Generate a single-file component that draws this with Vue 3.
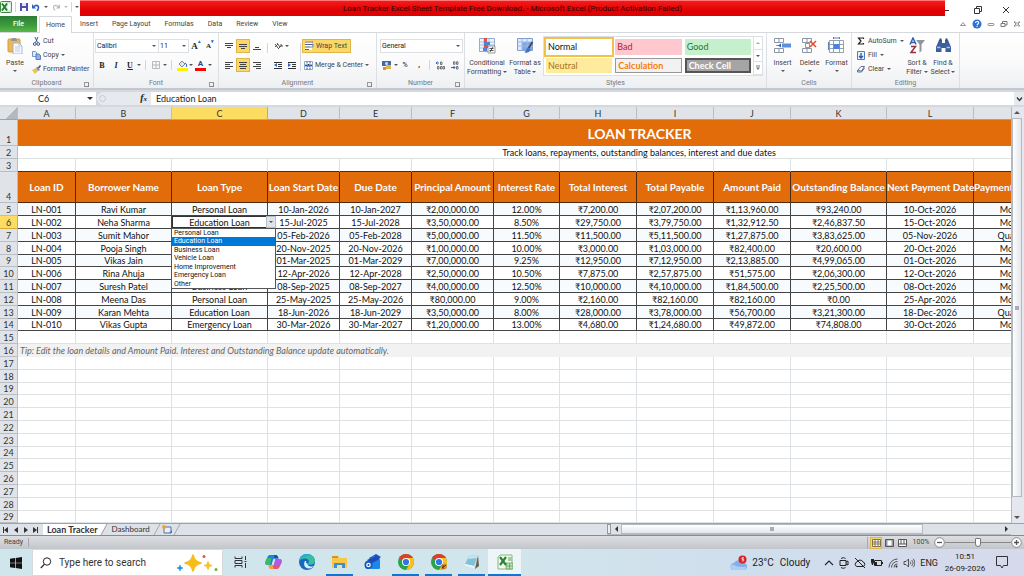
<script setup>
import { ref } from 'vue'

const tabs = ['Insert', 'Page Layout', 'Formulas', 'Data', 'Review', 'View']
const columns = [
  ['A', 58], ['B', 96], ['C', 96], ['D', 72], ['E', 72], ['F', 82], ['G', 66], ['H', 77],
  ['I', 77], ['J', 77], ['K', 96], ['L', 87], ['M', 86], ['N', 100], ['O', 101]
]
const headings = ['Loan ID', 'Borrower Name', 'Loan Type', 'Loan Start Date', 'Due Date', 'Principal Amount', 'Interest Rate', 'Total Interest', 'Total Payable', 'Amount Paid', 'Outstanding Balance', 'Next Payment Date', 'Payment Frequency', '', '']
const loans = [
  ['LN-001', 'Ravi Kumar', 'Personal Loan', '10-Jan-2026', '10-Jan-2027', '₹2,00,000.00', '12.00%', '₹7,200.00', '₹2,07,200.00', '₹1,13,960.00', '₹93,240.00', '10-Oct-2026', 'Monthly', '', ''],
  ['LN-002', 'Neha Sharma', 'Education Loan', '15-Jul-2025', '15-Jul-2028', '₹3,50,000.00', '8.50%', '₹29,750.00', '₹3,79,750.00', '₹1,32,912.50', '₹2,46,837.50', '15-Oct-2026', 'Monthly', '', ''],
  ['LN-003', 'Sumit Mahor', 'Business Loan', '05-Feb-2026', '05-Feb-2028', '₹5,00,000.00', '11.50%', '₹11,500.00', '₹5,11,500.00', '₹1,27,875.00', '₹3,83,625.00', '05-Nov-2026', 'Quarterly', '', ''],
  ['LN-004', 'Pooja Singh', 'Vehicle Loan', '20-Nov-2025', '20-Nov-2026', '₹1,00,000.00', '10.00%', '₹3,000.00', '₹1,03,000.00', '₹82,400.00', '₹20,600.00', '20-Oct-2026', 'Monthly', '', ''],
  ['LN-005', 'Vikas Jain', 'Home Improvement', '01-Mar-2025', '01-Mar-2029', '₹7,00,000.00', '9.25%', '₹12,950.00', '₹7,12,950.00', '₹2,13,885.00', '₹4,99,065.00', '01-Oct-2026', 'Monthly', '', ''],
  ['LN-006', 'Rina Ahuja', 'Personal Loan', '12-Apr-2026', '12-Apr-2028', '₹2,50,000.00', '10.50%', '₹7,875.00', '₹2,57,875.00', '₹51,575.00', '₹2,06,300.00', '12-Oct-2026', 'Monthly', '', ''],
  ['LN-007', 'Suresh Patel', 'Business Loan', '08-Sep-2025', '08-Sep-2027', '₹4,00,000.00', '12.50%', '₹10,000.00', '₹4,10,000.00', '₹1,84,500.00', '₹2,25,500.00', '08-Oct-2026', 'Monthly', '', ''],
  ['LN-008', 'Meena Das', 'Personal Loan', '25-May-2025', '25-May-2026', '₹80,000.00', '9.00%', '₹2,160.00', '₹82,160.00', '₹82,160.00', '₹0.00', '25-Apr-2026', 'Monthly', '', ''],
  ['LN-009', 'Karan Mehta', 'Education Loan', '18-Jun-2026', '18-Jun-2029', '₹3,50,000.00', '8.00%', '₹28,000.00', '₹3,78,000.00', '₹56,700.00', '₹3,21,300.00', '18-Dec-2026', 'Quarterly', '', ''],
  ['LN-010', 'Vikas Gupta', 'Emergency Loan', '30-Mar-2026', '30-Mar-2027', '₹1,20,000.00', '13.00%', '₹4,680.00', '₹1,24,680.00', '₹49,872.00', '₹74,808.00', '30-Oct-2026', 'Monthly', '', '']
]
const loanTypes = ['Personal Loan', 'Education Loan', 'Business Loan', 'Vehicle Loan', 'Home Improvement', 'Emergency Loan', 'Other']
const selected = ref('Education Loan')
const lastRow = 29
</script>

<template>
  <div class="app">
    <header class="titlebar">
      <div class="qat">
        <svg width="12" height="12" viewBox="0 0 12 12"><rect x=".5" y=".5" width="11" height="11" rx="1" fill="#e7f3e3" stroke="#3c8f3f" /><rect x="7" y="2" width="4" height="8" fill="#fff" stroke="#8cc08c" stroke-width=".5" /><path d="M2 2.500l5 7M7 2.500l-5 7" stroke="#217a2c" stroke-width="1.800" /></svg>
        <i class="bar"></i>
        <button aria-label="Save"><svg width="8" height="8" viewBox="0 0 8 8"><path d="M0 0h8v8H0z" fill="#4a4fb0" /><path d="M2 0h4v3H2z" fill="#dfe6fa" /><path d="M2 5h4v3H2z" fill="#fff" /></svg></button>
        <button aria-label="Undo"><svg width="8" height="8" viewBox="0 0 8 8"><path d="M2 3.500C5 1 7.500 3 6 6.500L5 8" fill="none" stroke="#2f62c4" stroke-width="1.600" /><path d="M0 1v4.500h4z" fill="#2f62c4" /></svg></button>
        <i class="caret"></i>
        <button aria-label="Redo"><svg width="8" height="8" viewBox="0 0 8 8"><path d="M6 3.500C3 1 .5 3 2 6l1 1.500" fill="none" stroke="#bbb" stroke-width="1.200" /><path d="M8 1v4.500H4z" fill="#bbb" /></svg></button>
        <i class="caret pale"></i>
        <i class="bar"></i>
        <i class="caret more"></i>
      </div>
      <div class="title">Loan Tracker Excel Sheet Template Free Download. - Microsoft Excel (Product Activation Failed)</div>
      <div class="win">
        <button aria-label="Minimize"><svg width="8" height="8" viewBox="0 0 8 8"><path d="M0 4.500h4" stroke="#333" /></svg></button>
        <button aria-label="Restore"><svg width="8" height="8" viewBox="0 0 8 8"><path d="M.5 2.500h5v5h-5zM2.500 2V.5h5v5H6" fill="none" stroke="#333" /></svg></button>
        <button aria-label="Close"><svg width="8" height="8" viewBox="0 0 8 8"><path d="M1 1l6 6M7 1L1 7" stroke="#333" /></svg></button>
      </div>
    </header>

    <nav class="tabs">
      <button class="file">File</button>
      <button class="home">Home</button>
      <button v-for="t in tabs" :key="t" class="tab">{{ t }}</button>
      <div class="mdi">
        <svg width="8" height="8" viewBox="0 0 8 8"><path d="M4 2.500L6.500 5.500h-5z" fill="#fff" stroke="#777" stroke-width=".8" /></svg>
        <svg width="10" height="10" viewBox="0 0 10 10"><circle cx="5" cy="5" r="4.500" fill="#2f6fd0" /><path d="M3.500 4c0-2 3.200-2 3.200-.2C6.700 5 5.100 5 5.100 6.200M5.100 7v1" fill="none" stroke="#fff" stroke-width="1.100" /></svg>
        <svg width="8" height="8" viewBox="0 0 8 8"><rect x="1" y="3.500" width="6" height="2" rx="1" fill="none" stroke="#777" stroke-width=".8" /></svg>
        <svg width="8" height="8" viewBox="0 0 8 8"><path d="M1 3.500h4v3H1zM2.500 3.500v-2h4.500v3.500H5" fill="none" stroke="#777" /></svg>
        <svg width="8" height="8" viewBox="0 0 8 8"><path d="M1 2h1.500L4 3.500 5.500 2H7L5 4l2 2H5.500L4 4.800 2.500 6H1l2-2z" fill="#fff" stroke="#777" stroke-width=".8" /></svg>
      </div>
    </nav>

    <section class="ribbon">
      <div class="group clipboard">
        <div class="body">
          <button class="big paste">
            <svg width="16" height="17" viewBox="0 0 16 17"><rect x="1" y="2" width="12" height="13" rx="1" fill="#ecb95a" stroke="#d79a3c" /><path d="M4 3c0-1 1-1 1.500-2h3c.5 1 1.500 1 1.500 2v1H4z" fill="#8b95a5" /><path d="M6 6h6l3 3v8H6z" fill="#f4f8fd" stroke="#8aa0bd" stroke-width=".7" /><path d="M12 6v3h3M8 10h5M8 12h5M8 14h5" fill="none" stroke="#a9bdd6" stroke-width=".7" /></svg>
            <span>Paste</span><i class="caret"></i>
          </button>
          <div class="list">
            <button><svg width="9" height="9" viewBox="0 0 9 9"><path d="M3 0l2.500 5.500M6 0L3.500 5.500" stroke="#33599b" /><circle cx="2.800" cy="7" r="1.400" fill="none" stroke="#33599b" /><circle cx="6.200" cy="7" r="1.400" fill="none" stroke="#33599b" /></svg>Cut</button>
            <button><svg width="9" height="9" viewBox="0 0 9 9"><path d="M.5.5h3l1 1v4h-4z" fill="#dfeafb" stroke="#5b7fb7" stroke-width=".8" /><path d="M4 3h3l1.500 1.500v4H4z" fill="#8fb2e6" stroke="#3f69ad" stroke-width=".8" /></svg>Copy<i class="caret"></i></button>
            <button><svg width="9" height="9" viewBox="0 0 9 9"><path d="M0 5l4-2 2 3-3 3z" fill="#eac54d" /><path d="M4 3l1.500-1.500L8 5 6 6z" fill="#8f8bb5" /><path d="M6 2.500L8 0l1 1-2 2.500z" fill="#463f6b" /></svg>Format Painter</button>
          </div>
        </div>
        <footer>Clipboard<i class="launch"></i></footer>
      </div>

      <div class="group font">
        <div class="body rows">
          <div class="row">
            <span class="combo name"><select aria-label="Font"><option>Calibri</option></select><i class="caret"></i></span>
            <span class="combo size"><select aria-label="Font size"><option>11</option></select><i class="caret"></i></span>
            <button class="cell serif grow-a">A<sup>▴</sup></button>
            <button class="cell serif shrink-a">A<sup>▾</sup></button>
          </div>
          <div class="row">
            <button class="cell serif"><b>B</b></button>
            <button class="cell serif"><b><em>I</em></b></button>
            <button class="cell serif"><b><u>U</u></b></button>
            <i class="caret"></i><i class="bar"></i>
            <button class="cell" aria-label="Borders"><svg width="8" height="8" viewBox="0 0 8 8"><path d="M.5.5h7v7h-7zM4 .5v7M.5 4h7" fill="none" stroke="#aaa" stroke-width=".8" /></svg></button>
            <i class="caret"></i><i class="bar"></i>
            <button class="cell" aria-label="Fill colour"><svg width="11" height="11" viewBox="0 0 11 11"><path d="M2 4l3-3 3 3-3 3z" fill="#dce6f4" stroke="#4c6da5" stroke-width=".8" /><path d="M8 3c2 1 2 3 1 4" fill="none" stroke="#2f62c4" /><path d="M0 8h11v3H0z" fill="#fff000" /></svg></button>
            <i class="caret"></i>
            <button class="cell under-red" aria-label="Font colour">A</button>
            <i class="caret"></i>
          </div>
        </div>
        <footer>Font<i class="launch"></i></footer>
      </div>

      <div class="group align">
        <div class="body">
          <div class="rows">
            <div class="row">
              <button class="sq" aria-label="Top align"><svg width="8" height="8" viewBox="0 0 8 8"><path d="M0 1.500h8M0 3.500h8M2 5.500h4" stroke="#444" /></svg></button>
              <button class="sq on" aria-label="Middle align"><svg width="8" height="8" viewBox="0 0 8 8"><path d="M0 2.500h8M0 4.500h8M2 6.500h4" stroke="#444" /></svg></button>
              <button class="sq" aria-label="Bottom align"><svg width="8" height="8" viewBox="0 0 8 8"><path d="M2 5.500h4M0 7.500h8" stroke="#444" /></svg></button>
            </div>
            <div class="row">
              <button class="sq" aria-label="Align left"><svg width="8" height="8" viewBox="0 0 8 8"><path d="M0 1.500h8M0 3.500h5M0 5.500h8M0 7.500h5" stroke="#444" /></svg></button>
              <button class="sq on" aria-label="Centre"><svg width="8" height="8" viewBox="0 0 8 8"><path d="M0 1.500h8M1 3.500h6M0 5.500h8M1 7.500h6" stroke="#444" /></svg></button>
              <button class="sq" aria-label="Align right"><svg width="8" height="8" viewBox="0 0 8 8"><path d="M0 1.500h8M3 3.500h5M0 5.500h8M3 7.500h5" stroke="#444" /></svg></button>
            </div>
          </div>
          <i class="bar"></i>
          <div class="rows orient">
            <div class="row">
              <button class="sq" aria-label="Orientation"><svg width="9" height="9" viewBox="0 0 9 9"><path d="M1 2l3 4M3 1l3 4M1 5l3-3M4 7l4-4M8 3v2M8 3H6" stroke="#555" fill="none" /></svg></button>
              <i class="caret"></i>
            </div>
            <div class="row">
              <button class="sq" aria-label="Decrease indent"><svg width="8" height="8" viewBox="0 0 8 8"><path d="M0 1.500h8M4 3.500h4M4 5.500h4M0 7.500h8" stroke="#333" /><path d="M3 2v4L0 4z" fill="#2f62c4" /></svg></button>
              <button class="sq" aria-label="Increase indent"><svg width="8" height="8" viewBox="0 0 8 8"><path d="M0 1.500h8M4 3.500h4M4 5.500h4M0 7.500h8" stroke="#333" /><path d="M0 2v4l3-2z" fill="#2f62c4" /></svg></button>
            </div>
          </div>
          <i class="bar tall"></i>
          <div class="rows wide">
            <button class="wrap"><svg width="9" height="10" viewBox="0 0 9 10"><path d="M0 0h7v9H0z" fill="#fff" /><path d="M0 1h8M0 3.500h8M0 6h5M0 8.500h4" stroke="#52617f" stroke-width="1.200" /><path d="M8 3v3H5" fill="none" stroke="#5c8fd9" /></svg>Wrap Text</button>
            <button class="merge"><svg width="9" height="9" viewBox="0 0 9 9"><path d="M.5.5h8v8h-8z" fill="#fff" stroke="#7f92b0" stroke-width=".8" /><path d="M1 3h7v3H1z" fill="#9cbcf0" /><path d="M1 4.500h2M6 4.500h2M3 .5v2M6 .5v2M3 6.500v2M6 6.500v2" stroke="#33599b" /><path d="M3.500 5.500l1-2.500 1 2.500" stroke="#222" fill="none" stroke-width=".8" /></svg>Merge &amp; Center<i class="caret"></i></button>
          </div>
        </div>
        <footer>Alignment<i class="launch"></i></footer>
      </div>

      <div class="group number">
        <div class="body rows">
          <div class="row">
            <span class="combo format"><select aria-label="Number format"><option>General</option></select><i class="caret"></i></span>
          </div>
          <div class="row">
            <button class="sq" aria-label="Accounting format"><svg width="10" height="10" viewBox="0 0 10 10"><path d="M0 1h9v5H0z" fill="#3f69ad" /><circle cx="4.500" cy="3.500" r="1.500" fill="#cfdcf2" /><path d="M4 5h5v4H4z" fill="#e0b54a" /><path d="M1 7h3v3H1z" fill="#c99636" /></svg></button>
            <i class="caret"></i>
            <button class="sq">%</button>
            <button class="sq"><b>,</b></button>
            <i class="bar"></i>
            <button class="sq" aria-label="Increase decimal"><svg width="9" height="9" viewBox="0 0 9 9"><path d="M0 2h3M1.500.5L0 2l1.500 1.500" stroke="#2f62c4" fill="none" /><path d="M4.500 1h1.500v2.500H4.500zM1.500 5.500H3V8H1.500zM4.500 5.500H6V8H4.500zM7 5.500h1.500V8H7z" fill="none" stroke="#555" stroke-width=".8" /></svg></button>
            <button class="sq" aria-label="Decrease decimal"><svg width="9" height="9" viewBox="0 0 9 9"><path d="M3.500.8H5v2.500H3.500zM6.500.8H8v2.500H6.500zM6.500 5.500H8V8H6.500z" fill="none" stroke="#555" stroke-width=".8" /><path d="M1 6.500h4M3.500 5L5 6.500 3.500 8" stroke="#2f62c4" fill="none" /></svg></button>
          </div>
        </div>
        <footer>Number<i class="launch"></i></footer>
      </div>

      <div class="group styles">
        <div class="body">
          <button class="big cond">
            <svg width="17" height="17" viewBox="0 0 17 17"><path d="M.5 1.500h15v13H.5z" fill="#f3f7fd" stroke="#8fa9cf" /><path d="M.5 5h15M.5 8h15M.5 11h15M5 1.500v13M10 1.500v13" stroke="#a9bfdf" /><path d="M5 1h3v4H5zM5 8h4v3H5z" fill="#e4503f" /><path d="M5 5h6v3H5zM4 11h4v3H4z" fill="#4f83d6" /><path d="M9 9h7v7H9z" fill="#f8f8f8" stroke="#777" stroke-width=".7" /><path d="M10.500 11.500h4M10.500 13.500h4M11 15l3-5" stroke="#333" stroke-width=".8" /></svg>
            <span>Conditional</span><span>Formatting <i class="caret"></i></span>
          </button>
          <button class="big table">
            <svg width="17" height="17" viewBox="0 0 17 17"><path d="M.5 1.500h15v12H.5z" fill="#dfeafb" stroke="#7f9fd0" /><path d="M5 5h10v8H5z" fill="#7da7e6" /><path d="M.5 5h15M.5 9h15M5 1.500v12M10 1.500v12" stroke="#9db8df" /><path d="M15.500 5L11 12" stroke="#445" stroke-width="1.800" /><path d="M11.500 10.500c-2 0-2 3-4 5 3 1 6-1 6-3z" fill="#4374c4" /></svg>
            <span>Format as</span><span>Table <i class="caret"></i></span>
          </button>
          <div class="gallery">
            <div class="swatches">
              <button class="sw normal">Normal</button>
              <button class="sw bad">Bad</button>
              <button class="sw good">Good</button>
              <button class="sw neutral">Neutral</button>
              <button class="sw calc">Calculation</button>
              <button class="sw check">Check Cell</button>
            </div>
            <div class="spin">
              <button aria-label="Scroll up"><i class="caret up pale"></i></button>
              <button aria-label="Scroll down"><i class="caret"></i></button>
              <button aria-label="More styles"><svg width="6" height="6" viewBox="0 0 6 6"><path d="M1 1h4" stroke="#777" /><path d="M1 2.500h4L3 5z" fill="#777" /></svg></button>
            </div>
          </div>
        </div>
        <footer>Styles</footer>
      </div>

      <div class="group cells">
        <div class="body">
          <button class="big"><svg width="17" height="17" viewBox="0 0 17 17"><path d="M.5 1.500h9v4h-9zM.5 11.500h9v4h-9zM5 1.500v4M5 11.500v4M2 8.500h4" fill="#fff" stroke="#8a95a5" /><path d="M8 6.500h9v4H8z" fill="#5b8fe0" /><path d="M4 8.500l3-2v4z" fill="#335fa8" /></svg><span>Insert</span><i class="caret"></i></button>
          <button class="big"><svg width="17" height="17" viewBox="0 0 17 17"><path d="M1.500 1.500h9v4h-9zM1.500 11.500h9v4h-9zM6 1.500v4M6 11.500v4M4.500 6.500h4v4h-4z" fill="#fff" stroke="#8a95a5" /><path d="M9 4l6 6M15 4l-6 6" stroke="#e2502f" stroke-width="1.600" /></svg><span>Delete</span><i class="caret"></i></button>
          <button class="big"><svg width="17" height="17" viewBox="0 0 17 17"><path d="M1.500 3.500h14v12h-14zM1.500 7.500h14M1.500 11.500h14M5.500 3.500v12M11.500 3.500v12" fill="#fff" stroke="#8a95a5" stroke-width=".9" /><path d="M5.500 7h6v5h-6z" fill="#4b83dc" /><path d="M5.500 1h6M5.500 0v2M11.500 0v2M.5 5v8" stroke="#5b7fb7" /></svg><span>Format</span><i class="caret"></i></button>
        </div>
        <footer>Cells</footer>
      </div>

      <div class="group editing">
        <div class="body">
          <div class="list">
            <button><svg width="8" height="8" viewBox="0 0 8 8"><path d="M6.500 2V1H1.500L4 4 1.500 7h5V6" fill="none" stroke="#222" stroke-width="1.200" /></svg>AutoSum<i class="caret"></i></button>
            <button><svg width="8" height="9" viewBox="0 0 8 9"><path d="M.5.5h7v8h-7z" fill="#e9f1fd" stroke="#4f7dc2" /><path d="M4 2v5M2 5l2 2 2-2" stroke="#2359b5" stroke-width="1.300" fill="none" /></svg>Fill<i class="caret"></i></button>
            <button><svg width="8" height="8" viewBox="0 0 8 8"><path d="M.5 5.500L4 1.500h3.500L4.500 6z" fill="#fff" stroke="#5a6f92" /><path d="M.5 5.500v1.500h4l3-4" fill="none" stroke="#5a6f92" /></svg>Clear<i class="caret"></i></button>
          </div>
          <button class="big sort"><svg width="17" height="17" viewBox="0 0 17 17"><path d="M1 7.500L4 1l3 6.500M2 5.500h4" fill="none" stroke="#2f62b4" stroke-width="1.500" /><path d="M2 9.500h4.500L2 15.500h5" fill="none" stroke="#9c2f3a" stroke-width="1.500" /><path d="M7 3h9l-3.500 4.500V14l-2 1.500v-8z" fill="#8f959e" /></svg><span>Sort &amp;</span><span>Filter <i class="caret"></i></span></button>
          <button class="big find"><svg width="17" height="17" viewBox="0 0 17 17"><path d="M4 3h3v3h3V3h3l3 7v5h-5.500v-4h-4v4H1v-5z" fill="#3d5f9e" /><path d="M4.500 1.500h2v2h-2zM10.500 1.500h2v2h-2z" fill="#25407a" /><path d="M2 10.500h3.500M11.500 10.500H15" stroke="#a9c2ec" stroke-width="1.500" /></svg><span>Find &amp;</span><span>Select <i class="caret"></i></span></button>
        </div>
        <footer>Editing</footer>
      </div>
    </section>

    <div class="formula">
      <div class="namebox"><input aria-label="Name box" value="C6" /><i class="caret"></i></div>
      <div class="fx"><i class="knob"></i><em>f<small>x</small></em></div>
      <input class="content" aria-label="Formula" value="Education Loan" />
      <button class="expand" aria-label="Expand formula bar"><svg width="7" height="6" viewBox="0 0 7 6"><path d="M1 1.500l2.500 3 2.500-3" fill="none" stroke="#333" stroke-width="1.300" /></svg></button>
    </div>

    <main class="book">
      <div class="viewport">
        <table>
          <colgroup><col class="rowhead" /><col v-for="c in columns" :key="c[0]" :style="{ width: c[1] + 'px' }" /></colgroup>
          <thead>
            <tr><th class="corner"></th><th v-for="c in columns" :key="c[0]" :class="{ active: c[0] === 'C' }">{{ c[0] }}</th></tr>
          </thead>
          <tbody class="intro">
            <tr class="r1"><th>1</th><td :colspan="columns.length" class="banner">LOAN TRACKER</td></tr>
            <tr><th>2</th><td :colspan="columns.length">Track loans, repayments, outstanding balances, interest and due dates</td></tr>
            <tr class="r3"><th>3</th><td v-for="c in columns" :key="c[0]"></td></tr>
            <tr class="r4"><th>4</th><td v-for="(h, i) in headings" :key="i">{{ h }}</td></tr>
          </tbody>
          <tbody class="grid">
            <tr v-for="(loan, i) in loans" :key="loan[0]" class="loan">
              <th :class="{ active: i === 1 }">{{ i + 5 }}</th>
              <td v-for="(v, j) in loan" :key="j" :class="{ current: i === 1 && j === 2 }">{{ v }}<template v-if="i === 1 && j === 2"><button class="opener" aria-label="Choose loan type"><i class="caret"></i></button><ul class="menu" role="listbox"><li v-for="t in loanTypes" :key="t" role="option" :aria-selected="t === selected" @click="selected = t">{{ t }}</li></ul></template></td>
            </tr>
            <tr><th>15</th><td v-for="c in columns" :key="c[0]"></td></tr>
            <tr class="tip"><th>16</th><td :colspan="columns.length">Tip: Edit the loan details and Amount Paid. Interest and Outstanding Balance update automatically.</td></tr>
            <tr v-for="n in lastRow - 16" :key="n"><th>{{ n + 16 }}</th><td v-for="c in columns" :key="c[0]"></td></tr>
          </tbody>
        </table>
      </div>
      <div class="vscroll">
        <button aria-label="Scroll up"><i class="caret up"></i></button>
        <div class="vthumb"><i></i></div>
        <div class="track"></div>
        <button aria-label="Scroll down"><i class="caret"></i></button>
      </div>
    </main>

    <div class="sheets">
      <div class="nav">
        <svg width="42" height="8" viewBox="0 0 42 8"><path d="M3.500 1v6M37.500 1v6" stroke="#333" /><path d="M8 1v6L4 4zM18 1v6l-4-3zM24 1v6l4-3zM33 1v6l4-3z" fill="#333" /></svg>
      </div>
      <button class="sheet current-sheet">Loan Tracker</button>
      <svg width="8" height="11" viewBox="0 0 8 11"><path d="M0 0h7L1 11H0z" fill="#fff" /><path d="M7 0L1 11" stroke="#888" stroke-width=".8" /></svg>
      <button class="sheet other-sheet">Dashboard</button>
      <svg width="32" height="11" viewBox="0 0 32 11"><path d="M8 0L2 11M28 0l-6 11" stroke="#999" stroke-width=".8" /><path d="M12 3h7v6h-7z" fill="#e8eefb" stroke="#5671a8" /><path d="M17 9l3-3v3z" fill="#5671a8" /><circle cx="12" cy="3" r="2" fill="#f0a52c" /></svg>
      <div class="gap"></div>
      <div class="hscroll">
        <i class="split"></i>
        <button aria-label="Scroll left"><i class="caret left"></i></button>
        <div class="hthumb"><i></i></div>
        <div class="track"></div>
        <button aria-label="Scroll right"><i class="caret right"></i></button>
      </div>
    </div>

    <div class="status">
      <span class="ready">Ready</span>
      <div class="views">
        <button class="on" aria-label="Normal view"><svg width="9" height="8" viewBox="0 0 9 8"><path d="M.5.5h8v7h-8zM3 .5v7M6 .5v7M.5 3h8M.5 5h8" fill="#fff" stroke="#665a30" stroke-width=".8" /></svg></button>
        <button aria-label="Page layout view"><svg width="9" height="8" viewBox="0 0 9 8"><path d="M.5.5h8v7h-8z" fill="#999" stroke="#555" /><path d="M2.500 1.500h4v5h-4z" fill="#fff" /></svg></button>
        <button aria-label="Page break view"><svg width="9" height="8" viewBox="0 0 9 8"><path d="M.5.5h8v7h-8z" fill="#fff" stroke="#555" /><path d="M3 0v5M6 0v5M0 5h9" stroke="#555" /></svg></button>
      </div>
      <span class="pct">100%</span>
      <button class="zoom" aria-label="Zoom out"><svg width="11" height="11" viewBox="0 0 11 11"><circle cx="5.500" cy="5.500" r="4.800" fill="#fff" stroke="#888" /><path d="M3 5.500h5" stroke="#555" stroke-width="1.300" /></svg></button>
      <input class="slider" type="range" aria-label="Zoom" min="10" max="190" value="100" />
      <button class="zoom" aria-label="Zoom in"><svg width="11" height="11" viewBox="0 0 11 11"><circle cx="5.500" cy="5.500" r="4.800" fill="#fff" stroke="#888" /><path d="M3 5.500h5M5.500 3v5" stroke="#555" stroke-width="1.300" /></svg></button>
    </div>

    <div class="taskbar">
      <button class="start" aria-label="Start"><svg width="12" height="12" viewBox="0 0 12 12"><path d="M0 1.800l5-.7v4.600H0zM5.700 1L12 0v5.700H5.700zM0 6.300h5v4.600l-5-.7zM5.700 6.300H12V12l-6.300-1z" fill="#111" /></svg></button>
      <label class="search">
        <svg width="12" height="12" viewBox="0 0 12 12"><circle cx="7" cy="4.500" r="3.700" fill="none" stroke="#222" /><path d="M4.300 7.300L.8 11" stroke="#222" stroke-width="1.100" /></svg>
        <input aria-label="Search" placeholder="Type here to search" />
        <svg width="42" height="18" viewBox="0 0 42 18"><path d="M16 1c1 5 3 7 8 8-5 1-7 3-8 8-1-5-3-7-8-8 5-1 7-3 8-8z" fill="#f6bd18" stroke="#f6bd18" stroke-width="1.500" stroke-linejoin="round" /><path d="M31 7.500c.6 2.500 1.500 3.500 4 4-2.500.5-3.400 1.500-4 4-.6-2.500-1.500-3.500-4-4 2.500-.5 3.400-1.500 4-4z" fill="#f6c22d" stroke="#f6c22d" /><path d="M3 11c.5 2 1 2.500 3 3-2 .5-2.500 1-3 3-.5-2-1-2.500-3-3 2-.5 2.500-1 3-3z" fill="#1b8fe0" stroke="#1b8fe0" stroke-width=".6" /><circle cx="27" cy="2.500" r="1.500" fill="#ea5a28" /><circle cx="39" cy="15.500" r="1.500" fill="#69b82d" /></svg>
      </label>
      <div class="apps">
        <button aria-label="Task view"><svg width="13" height="12" viewBox="0 0 13 12"><path d="M1 .5v2h7v-2M1 11.500v-2h7v2M1 4.500h7v3H1zM11.500 0v4M11.500 7v5M10.500 5.500h2" fill="none" stroke="#333" /></svg></button>
        <button aria-label="Copilot"><svg width="17" height="16" viewBox="0 0 17 16"><path d="M6 1h5c1 0 1.500 1 2 2l.5 1.500H9.500C8 4.500 8 6 7.500 7.500L6.500 11H3C0 11 0 9 .7 7L2.500 3C3 1.500 4 1 6 1z" fill="#1a84dc" /><path d="M9 1h2c1 0 1.500 1 2 2l.5 1.500H9.500z" fill="#2148b8" /><path d="M.7 7L2 4h4.500L5 11H3C0 11 0 9 .7 7z" fill="#3cb96d" /><path d="M11 15H6c-1 0-1.500-1-2-2l-.5-1.500h4C9 11.500 9 10 9.500 8.500L10.500 5H14c3 0 3 2 2.300 4L14.500 13c-.5 1.500-1.500 2-3.500 2z" fill="#e8507d" /><path d="M10.500 5H14c3 0 3 2 2.300 4l-1 2H9z" fill="#b15be0" /><path d="M4 13l-.5-1.500h4L9 15H6c-1 0-1.500-1-2-2z" fill="#f4a13b" /></svg></button>
        <button aria-label="Edge"><svg width="16" height="16" viewBox="0 0 16 16"><circle cx="8" cy="8" r="8" fill="#1769bd" /><path d="M.2 7C1 2.500 4 0 8 0c4.500 0 8 3 8 6.500 0 3-2.500 4.300-5 4.300-1.500 0-2.500-.6-1.500-1.800 1-1.800 0-4.500-3.500-4.500-3 0-5 1-5.800 2.500z" fill="#38bfa0" /><path d="M.2 7C1 2.500 4 0 8 0c2 0 4 1 5 2C8 .5 3 3 .2 7z" fill="#2ba8dc" /><path d="M6 7c-2 3-.5 7.500 4 7.500 2 0 3.500-.8 4.500-2.500-3 1.500-6 0-6-2.500C7 9.500 6.500 8.500 7.500 7z" fill="#d6eff7" /></svg></button>
        <button class="open" aria-label="File Explorer"><svg width="16" height="14" viewBox="0 0 16 14"><path d="M0 1h6l1.500 2H15v10H0z" fill="#f9c846" /><path d="M0 1h6v2H0z" fill="#d79515" /><path d="M2 8h11v5H2z" fill="#3c8fd6" /><path d="M5 10h5v3H5z" fill="#fbe08a" /></svg></button>
        <button aria-label="Blue app"><svg width="17" height="16" viewBox="0 0 17 16"><path d="M5 4l7-4 5 3-9 7z" fill="#1b50c8" /><path d="M1 8l9-6 6 5v7c0 1-1 1-2 1H3c-2 0-2-3-2-7z" fill="#2aa3ee" /><path d="M3 6l9-4 4 3-8 5z" fill="#1d49b8" /><path d="M8 9l8-4v8c0 1-1 2-2 2H8z" fill="#1e86e6" /><circle cx="4.500" cy="11" r="4" fill="#1759bc" /><circle cx="4.500" cy="11" r="1.700" fill="none" stroke="#fff" stroke-width="1.200" /></svg></button>
        <button v-for="n in 2" :key="n" class="open" aria-label="Chrome"><svg width="16" height="16" viewBox="0 0 16 16"><circle cx="8" cy="8" r="8" fill="#2ba24c" /><path d="M1.100 4a8 8 0 0 1 13.800 0L8 8z" fill="#e33b2e" /><path d="M8 4h6.900A8 8 0 0 1 8 16l3.500-6z" fill="#fbc116" /><circle cx="8" cy="8" r="4" fill="#fff" /><circle cx="8" cy="8" r="3.100" fill="#2f75e6" /><g v-if="n === 2"><circle cx="13" cy="12.500" r="3" fill="#d78e3a" /><path d="M11 14l4-3M12 11v4" stroke="#5a2b16" /></g></svg></button>
        <button class="open" aria-label="Notepad"><svg width="16" height="15" viewBox="0 0 16 15"><path d="M14 1l1 11-4 3z" fill="#6c6153" /><path d="M5 2l9-1-4 11-9-2z" fill="#7fc1d6" /><path d="M5 2l9-1-1 3-9 1z" fill="#c4e5ee" /><path d="M1 10l9 2v2l-9-2.500z" fill="#eef5f7" /></svg></button>
        <button class="open focus" aria-label="Excel"><svg width="16" height="16" viewBox="0 0 16 16"><path d="M3 1h12v14H1V3z" fill="#f3faf2" stroke="#83b77f" /><path d="M9 9h7v6H9z" fill="#bfe0b9" stroke="#5a9a58" stroke-width=".7" /><path d="M9 12h7M12.500 9v6" stroke="#5a9a58" stroke-width=".7" /><path d="M3 3l6 8M9 3l-6 8" stroke="#2c8534" stroke-width="2.200" /><path d="M11 3h4v4h-4z" fill="#9fd093" /></svg></button>
      </div>
      <div class="gap"></div>
      <div class="weather">
        <svg width="18" height="16" viewBox="0 0 18 16"><path d="M4 15a3.500 3.500 0 0 1 0-7 5 5 0 0 1 9 0 3.500 3.500 0 0 1 1 7z" fill="#84b0ea" /><path d="M4 15a3.500 3.500 0 0 1-2-6c4 3 9 3 14 3 0 2-1 3-2 3z" fill="#acd0f5" /><circle cx="12.500" cy="4.500" r="4" fill="#d3232b" /><path d="M14 2.800h-2v1.500h1.500c.8 1.300-.3 2.100-1.700 1.700" fill="none" stroke="#fff" stroke-width=".9" /></svg>
        <span>23°C</span><span>Cloudy</span>
      </div>
      <div class="tray">
        <svg width="10" height="10" viewBox="0 0 10 10"><path d="M1 7l4-4 4 4" fill="none" stroke="#222" stroke-width="1.100" /></svg>
        <svg width="10" height="12" viewBox="0 0 10 12"><path d="M1 3.500h6v5H1zM7 5l2-1v4L7 7M2 1.500C3.500.5 5 .5 6.500 1.500M2 10.500c1.500 1 3 1 4.500 0" fill="none" stroke="#222" /></svg>
        <svg width="12" height="12" viewBox="0 0 12 12"><path d="M3 9.500a2.300 2.300 0 0 1 0-4.500 3.300 3.300 0 0 1 6 0 2.300 2.300 0 0 1 0 4.500zM1 1l10 10" fill="none" stroke="#222" /></svg>
        <svg width="12" height="10" viewBox="0 0 12 10"><path d="M3.500 2.500h7v5h-7zM11.500 4v2" fill="none" stroke="#222" /><path d="M0 1h3v3L2 7H1L0 4z" fill="#222" /><path d="M4 4h2v3H4z" fill="#222" /></svg>
        <svg width="10" height="10" viewBox="0 0 10 10"><path d="M1 9.500A8.500 8.500 0 0 1 9.500 1M3.500 9.500a6 6 0 0 1 6-6M6 9.500a3.500 3.500 0 0 1 3.500-3.500" fill="none" stroke="#444" stroke-width=".9" /><circle cx="8.500" cy="8.500" r="1" fill="#222" /></svg>
        <svg width="12" height="10" viewBox="0 0 12 10"><path d="M1 3.500h2L5.500 1v8L3 6.500H1zM7 3.500c1 1 1 2 0 3M8.500 2c2 2 2 4 0 6M10 .8c2.500 2.500 2.500 6 0 8.400" fill="none" stroke="#333" stroke-width=".8" /></svg>
        <span>ENG</span>
      </div>
      <div class="clock"><span>10:51</span><span>26-09-2026</span></div>
      <button class="note" aria-label="Notifications"><svg width="12" height="13" viewBox="0 0 12 13"><path d="M.5.5h11v9h-4L6 12 4.500 9.500h-4z" fill="none" stroke="#333" /></svg></button>
    </div>
  </div>
</template>

<style>
html, body { margin: 0; height: 100%; overflow: hidden; }
</style>

<style scoped>
* { box-sizing: border-box; }
.app { display: flex; flex-direction: column; height: 100vh; overflow: hidden; background: #fff; color: #444; font: 7px/9px Roboto, "Noto Sans", sans-serif; }
button, input, select { font: inherit; color: inherit; border: 0; padding: 0; margin: 0; background: none; }
button { display: flex; align-items: center; justify-content: center; white-space: nowrap; }
input { min-width: 0; outline: none; }
svg { flex: none; display: block; }
.caret { display: inline-block; flex: none; width: 0; height: 0; border: 2px solid transparent; border-top-color: #555; border-bottom-width: 0; }
.caret.pale { border-top-color: #bbb; }
.caret.up { border-width: 0 2px 2px; border-bottom-color: #555; }
.caret.up.pale { border-bottom-color: #aaa; }
.caret.left { border-width: 3px 3px 3px 0; border-color: transparent #333 transparent transparent; }
.caret.right { border-width: 3px 0 3px 3px; border-color: transparent transparent transparent #333; }
.bar { flex: none; width: 1px; height: 10px; background: #d3d6db; }
.gap, .track { flex: 1; }

.titlebar { display: flex; flex: none; height: 16px; background: #fff; }
.qat { display: flex; align-items: center; gap: 4px; width: 80px; flex: none; padding: 0 2px 2px 0; }
.qat .bar, .qat .more { margin-left: -1px; }
.title { flex: 1; display: flex; align-items: center; justify-content: center; border-top: 1px solid #f77; background: linear-gradient(#f61a1a, #e00303 60%, #dd0000); color: #300; font-size: 8px; white-space: nowrap; }
.win { display: flex; flex: none; width: 79px; align-items: center; justify-content: space-between; padding: 3px 14px 0 0; }

.tabs { display: flex; flex: none; height: 17px; background: #fff; border-bottom: 1px solid #d5d9de; }
.file { width: 37px; background: linear-gradient(#2a7d33, #3f9d3d 60%, #58b84a); color: #fff; margin-right: 2px; font-weight: 500; }
.home { width: 33px; height: 17px; border: 1px solid #d5d9de; border-bottom: 0; background: #fff; margin-right: 8px; }
.tab { margin-right: 14px; }
.mdi { display: flex; align-items: center; gap: 5px; margin-left: auto; padding-right: 3px; }

.ribbon { display: flex; flex: none; height: 57px; border-bottom: 2px solid #c3c8ce; background: linear-gradient(#fff, #fbfbfc 50%, #edeff2); }
.group { display: flex; flex-direction: column; flex: none; border-right: 1px solid #dcdfe3; }
.body { display: flex; flex: 1; padding-top: 1px; }
.group footer { position: relative; height: 9px; line-height: 9px; text-align: center; color: #727984; }
.launch { position: absolute; right: 4px; top: 3px; width: 5px; height: 5px; border: solid #999; border-width: 1px 0 0 1px; }
.launch::after { content: ""; position: absolute; right: 0; bottom: 0; width: 3px; height: 3px; border: solid #888; border-width: 0 1px 1px 0; }
.clipboard { width: 94px; }
.font { width: 125px; }
.align { width: 158px; }
.number { width: 88px; }
.styles { width: 302px; }
.cells { width: 85px; }
.editing { width: 108px; }
.cells .body { padding-left: 2px; }
.big { flex-direction: column; justify-content: flex-start; width: 27px; padding-top: 3px; }
.big svg { margin-bottom: 5px; }
.big .caret { margin-top: 2px; }
.big span .caret { vertical-align: middle; margin: 0; }
.paste { width: 30px; }
.cond { width: 40px; margin-left: 2px; }
.table { width: 36px; }
.sort, .find { width: 26px; }
.list { display: flex; flex-direction: column; }
.list button { height: 14px; justify-content: flex-start; gap: 3px; padding-left: 2px; }
.clipboard .list button { gap: 2px; }
.editing .list { width: 52px; padding-left: 3px; }
.rows { display: flex; flex-direction: column; gap: 5px; padding-top: 5px; }
.body.rows { padding-top: 6px; }
.row { display: flex; align-items: center; height: 14px; }
.combo { position: relative; display: flex; height: 14px; border: 1px solid #dcdfe3; background: #fff; color: #222; }
.combo select { appearance: none; width: 100%; padding-left: 1px; outline: none; }
.combo .caret { position: absolute; right: 2px; top: 5px; }
.name { width: 64px; margin-left: 1px; }
.size { width: 30px; border-left: 0; }
.format { width: 83px; margin-left: 3px; }
.cell { width: 14px; height: 14px; color: #222; }
.font .row:last-child { padding-left: 1px; }
.font .row:last-child .bar { margin: 0 3px 0 4px; }
.serif { font-family: "Liberation Serif", serif; font-size: 8px; }
.serif sup { font-size: 5px; line-height: 5px; color: #2f62c4; align-self: flex-start; }
.grow-a { font-weight: 700; font-size: 9px; }
.shrink-a { font-weight: 700; font-size: 7px; }
.under-red { width: 11px; height: 11px; border-bottom: 3px solid #f00; color: #234a9a; font-weight: 700; font-size: 8px; margin: 0 2px; }
.sq { width: 14px; height: 14px; color: #222; }
.on { background: #fbd768; outline: 1px solid #e0b54a; outline-offset: -1px; }
.align .body { align-items: flex-start; padding-left: 3px; }
.align .bar { margin: 9px 3px 0; }
.align .bar.tall { height: 28px; margin-left: 0; margin-right: 1px; }
.orient { width: 29px; }
.wrap, .merge { height: 14px; gap: 2px; justify-content: flex-start; padding: 0 2px; }
.wrap { width: 49px; background: #fbd768; border: 1px solid #e0b54a; }
.number .row:last-child { padding-left: 3px; }
.number .bar { margin: 0 3px; }
.gallery { display: flex; width: 220px; height: 40px; margin-top: 2px; border: 1px solid #dcdfe3; background: #fff; }
.swatches { flex: 1; display: grid; grid-template-columns: repeat(3, 1fr); grid-template-rows: 1fr 1fr; gap: 3px; padding: 2px; font: 9px/11px Lato, "Noto Sans", sans-serif; }
.sw { justify-content: flex-start; padding-left: 2px; }
.normal { background: #fff; color: #111; outline: 2px solid #f0c14c; }
.bad { background: #ffc7ce; color: #b02030; }
.good { background: #c6efce; color: #1d7a28; }
.neutral { background: #ffeb9c; color: #a5731a; }
.calc { background: #f2f2f2; border: 1px solid #999; color: #fa7d00; font-weight: 700; }
.check { background: #a5a5a5; border: 2px double #555; color: #fff; font-weight: 700; }
.spin { display: flex; flex-direction: column; width: 9px; }
.spin button { flex: 1; border: 1px solid #dcdfe3; border-width: 0 0 1px 1px; }

.formula { display: flex; flex: none; height: 17px; padding: 2px 0; background: #d5d9df; font: 9px/12px Lato, "Noto Sans", sans-serif; color: #222; }
.namebox { display: flex; align-items: center; width: 96px; background: #fff; padding-right: 3px; }
.namebox input { flex: 1; text-align: center; }
.namebox .caret { border-width: 3px 3px 0; border-top-color: #333; }
.fx { display: flex; align-items: center; justify-content: space-between; width: 54px; background: #e6e9ed; border-radius: 7px 0 0 7px; margin-left: 1px; padding: 0 4px 0 2px; font: italic 700 10px/12px "Liberation Serif", serif; }
.fx small { font-size: 7px; }
.knob { width: 7px; height: 7px; border: 1px solid #c5cad1; border-radius: 50%; }
.content { flex: 1; background: #fff; padding-left: 5px; }
.expand { width: 10px; background: #e6e9ed; }

.book { display: flex; flex: 1; min-height: 0; overflow: hidden; background: #e4e8ee; }
.viewport { flex: 1; min-width: 0; overflow: hidden; background: #fff; }
table { table-layout: fixed; width: 1261px; border-collapse: separate; border-spacing: 0; font: 9px/11px Lato, "Noto Sans", sans-serif; color: #111; }
.rowhead { width: 18px; }
th, td { height: 13px; padding: 0; border: solid #dfe2e5; border-width: 0 1px 1px 0; text-align: center; font-weight: 400; white-space: nowrap; }
th { background: #e0e4e9; border-color: #b9bec5; color: #333; vertical-align: bottom; }
thead th { vertical-align: middle; border-color: #9da3ab #b9bec5; }
.corner { background: linear-gradient(135deg, #dfe3e8 60%, #b2b8c0 60%); }
th.active { background: #fddc62; border-color: #d8a93b; }
.grid tr:nth-child(5n) > * { height: 12px; line-height: 10px; }
.r1 > * { height: 26px; }
.banner { background: #e26b0a; color: #fff; font-weight: 700; font-size: 14px; border: 0; }
.r3 td { border-bottom-color: #333; }
.r4 > * { height: 31px; }
.r4 td { background: #e26b0a; color: #fff; font-weight: 700; font-size: 10px; border-color: #4d2a0c; }
.loan td { border-color: #444; }
.loan:nth-child(odd) td { background: #f7fbfe; }
.tip td { background: #f2f2f2; text-align: left; font-style: italic; color: #666; padding-left: 2px; border-color: #f2f2f2; }
.loan td.current { position: relative; box-shadow: inset 0 0 0 1px #333; }
.opener { position: absolute; left: 100%; top: 0; width: 10px; height: 12px; background: #dfe3ea; border: 1px solid #b9bec5; margin-left: -1px; }
.menu { position: absolute; z-index: 2; left: 0; top: 100%; display: flex; flex-direction: column; width: 105px; height: 61px; margin: 0 0 0 -1px; padding: 0; list-style: none; background: #fff; border: 1px solid #555; text-align: left; font: 7px/8px Roboto, "Noto Sans", sans-serif; }
.menu li { flex: 1; padding-left: 2px; }
.menu li[aria-selected="true"] { background: #0078d7; color: #fff; }

.vscroll { display: flex; flex-direction: column; width: 11px; margin-right: 2px; border-left: 1px solid #b5bac2; }
.vscroll button { height: 11px; }
.vscroll .caret { border-left-width: 3px; border-right-width: 3px; }
.vscroll .caret:not(.up) { border-top-width: 3px; }
.vscroll .caret.up { border-bottom-width: 3px; }
.vthumb { display: flex; align-items: center; justify-content: center; height: 379px; background: linear-gradient(90deg, #fff, #e3e6eb); border: 1px solid #b5bac2; }
.vthumb i { width: 4px; height: 4px; background: #aab; }

.sheets { display: flex; flex: none; height: 12px; border-top: 1px solid #9da3ab; background: #dde1e8; font: 9px/11px Lato, "Noto Sans", sans-serif; color: #333; }
.nav { width: 43px; display: flex; align-items: center; }
.sheet { padding: 0 2px 0 4px; }
.current-sheet { background: #fff; font-weight: 700; }
.other-sheet { font-size: 8px; }
.hscroll { display: flex; width: 404px; margin-right: 13px; border-bottom: 1px solid #b5bac2; }
.hscroll button { width: 10px; }
.split { width: 4px; border: 1px solid #999; background: #eee; }
.hthumb { width: 302px; display: flex; align-items: center; justify-content: center; background: linear-gradient(#fff, #e3e6eb); border: 1px solid #b5bac2; }
.hthumb i { width: 4px; height: 4px; background: #aab; }

.status { display: flex; flex: none; align-items: center; height: 14px; border-top: 1px solid #868c95; background: linear-gradient(#dcdee1, #c2c6cb); padding-right: 2px; }
.ready { padding: 0 5px 0 4px; border-right: 1px solid #a5a9ae; margin-right: auto; }
.views { display: flex; gap: 1px; border-left: 1px solid #aaa; padding-left: 2px; }
.views button { width: 12px; height: 12px; }
.pct { width: 26px; text-align: center; }
.slider { appearance: none; width: 66px; height: 11px; background: linear-gradient(#888, #888) center / 100% 1px no-repeat; }
.slider::-webkit-slider-thumb { appearance: none; width: 6px; height: 9px; background: #fff; border: 1px solid #777; border-radius: 1px 1px 3px 3px; }

.taskbar { display: flex; flex: none; height: 27px; background: linear-gradient(90deg, #cfe6ec, #d2e5ec 50%, #cfdfec 70%, #d6d9ec); font: 10px/12px Roboto, "Noto Sans", sans-serif; color: #222; }
.start { width: 32px; }
.search { display: flex; align-items: center; width: 191px; background: #fff; border: 1px solid #d5dadd; padding: 0 3px 0 7px; gap: 7px; }
.search input { flex: 1; }
.search input::placeholder { color: #333; opacity: 1; }
.apps { display: flex; padding-left: 1px; }
.apps button { width: 33px; border-bottom: 2px solid transparent; }
.apps .open { width: 27px; margin: 0 3px; border-color: #0a78d4; }
.apps .focus { background: #eef5f8; width: 33px; margin: 0; }
.weather { display: flex; align-items: center; gap: 6px; margin-right: 14px; }
.weather svg { margin-right: -2px; }
.tray { display: flex; align-items: center; gap: 5px; }
.tray span { font-size: 9px; }
.clock { display: flex; flex-direction: column; align-items: center; justify-content: center; width: 54px; font-size: 8px; line-height: 12px; }
.note { width: 20px; margin-right: 12px; }
</style>
